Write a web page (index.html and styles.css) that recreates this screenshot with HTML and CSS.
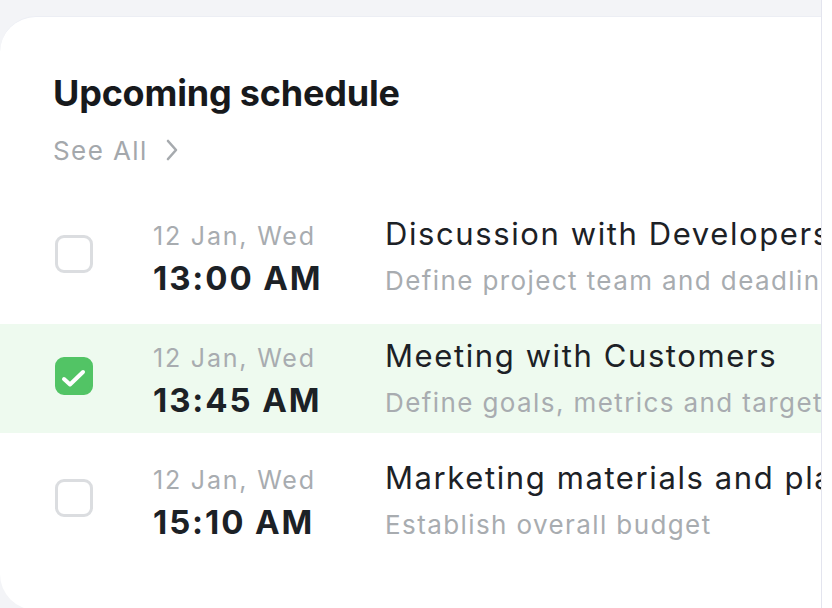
FILE: index.html
```html
<!DOCTYPE html>
<html>
<head>
<meta charset="utf-8">
<link rel="stylesheet" href="styles.css">
</head>
<body>
<div class="screen">
  <div class="card">
    <div class="header">
      <h1 class="title">Upcoming schedule</h1>
      <a class="see-all">See All
        <svg class="chev" width="16" height="24" viewBox="0 0 16 24"><path d="M4 3 L12 12 L4 21" fill="none" stroke="#a6aaae" stroke-width="2.6" stroke-linecap="round" stroke-linejoin="round"/></svg>
      </a>
    </div>
    <div class="list">
      <div class="row">
        <span class="check"></span>
        <span class="date">12 Jan, Wed</span>
        <span class="name">Discussion with Developers</span>
        <span class="time">13:00 AM</span>
        <span class="desc">Define project team and deadlines</span>
      </div>
      <div class="row active">
        <span class="check on">
          <svg width="37" height="37" viewBox="0 0 37 37"><path d="M9 22 L15 27.5 L28 15" fill="none" stroke="#ffffff" stroke-width="4" stroke-linecap="round" stroke-linejoin="round"/></svg>
        </span>
        <span class="date">12 Jan, Wed</span>
        <span class="name">Meeting with Customers</span>
        <span class="time">13:45 AM</span>
        <span class="desc">Define goals, metrics and targets</span>
      </div>
      <div class="row">
        <span class="check"></span>
        <span class="date">12 Jan, Wed</span>
        <span class="name">Marketing materials and planning</span>
        <span class="time">15:10 AM</span>
        <span class="desc">Establish overall budget</span>
      </div>
    </div>
  </div>
</div>
</body>
</html>
```

FILE: styles.css
```css
* { box-sizing: border-box; }
html, body { margin: 0; padding: 0; background: #ffffff; }
body { font-family: Inter, "Noto Sans", sans-serif; width: 832px; height: 608px; overflow: hidden; }

.screen {
  width: 822px;
  height: 608px;
  background: #f3f4f7;
  border-right: 1px solid #e3e4ee;
  padding-top: 16px;
  overflow: hidden;
}

.card {
  background: #ffffff;
  height: 594px;
  border-radius: 36px 0 0 36px;
  border-top: 1px solid #eceef4;
  overflow: hidden;
}

.header { padding: 54px 0 0 53px; }

.title {
  margin: 0;
  font-size: 36px;
  line-height: 44px;
  font-weight: 700;
  color: #17191c;
  letter-spacing: -0.2px;
}

.see-all {
  margin-top: 20px;
  display: flex;
  align-items: center;
  gap: 16px;
  font-size: 26px;
  line-height: 32px;
  color: #a4a8ac;
  letter-spacing: 1.4px;
}
.chev { display: block; margin-top: -2px; }

.list {
  margin-top: 35px;
  display: flex;
  flex-direction: column;
  gap: 13px;
}

.row {
  display: grid;
  grid-template-columns: 98px 232px 1fr;
  grid-template-rows: auto auto;
  align-items: baseline;
  padding: 14px 0 7px 55px;
  height: 109px;
  white-space: nowrap;
}
.row.active { background: #eefaef; }

.check {
  grid-row: 1 / span 2;
  grid-column: 1;
  align-self: center;
  width: 38px;
  height: 38px;
  border: 3px solid #dbdde0;
  border-radius: 9px;
  margin-bottom: 12px;
}
.check.on {
  background: #52c465;
  border-color: #52c465;
  position: relative;
}
.check.on svg { position: absolute; left: -3px; top: -3px; }

.date {
  grid-column: 2; grid-row: 1;
  font-size: 25px;
  line-height: 36px;
  color: #a8acb0;
  letter-spacing: 1.8px;
}
.time {
  grid-column: 2; grid-row: 2;
  font-size: 33px;
  line-height: 48px;
  font-weight: 700;
  color: #1c2126;
  letter-spacing: 1.9px;
}
.name {
  grid-column: 3; grid-row: 1;
  font-size: 31px;
  line-height: 36px;
  color: #1c2126;
  letter-spacing: 1.6px;
  overflow: hidden;
}
.desc {
  grid-column: 3; grid-row: 2;
  font-size: 26px;
  line-height: 48px;
  color: #a8acb0;
  letter-spacing: 1.4px;
  overflow: hidden;
}
```
